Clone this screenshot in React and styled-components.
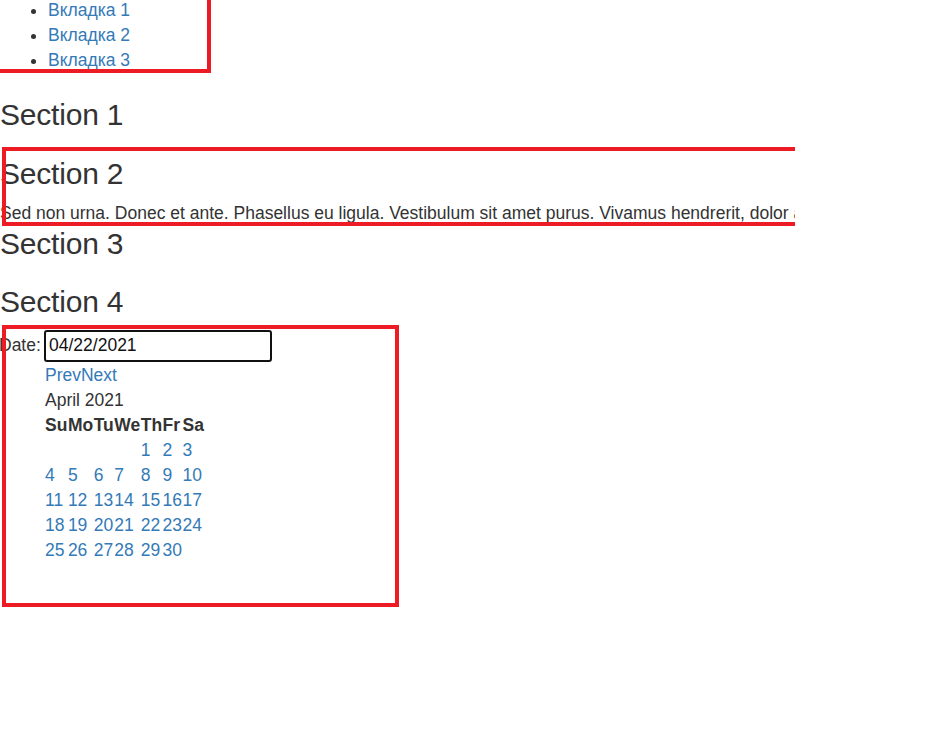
import React from "react";
import styled, { createGlobalStyle } from "styled-components";

const RED = "#ed1c24";
const LINK = "#337ab7";

const GlobalStyle = createGlobalStyle`
  html, body { margin: 0; padding: 0; background: #fff; }
  body {
    font-family: "Liberation Sans", Arial, Helvetica, sans-serif;
    font-size: 17.5px;
    line-height: 25px;
    color: #333;
  }
  * { box-sizing: border-box; }
`;

const Page = styled.div`
  width: 795px;
  overflow: hidden;
  padding-bottom: 40px;
`;

const framed = `
  outline: 4px solid ${RED};
  outline-offset: -6px;
`;

const TabList = styled.ul`
  ${framed}
  width: 222.5px;
  margin: -9px 0 0 -10px;
  padding: 7.4px 0 1.6px 58px;
  list-style: disc;
`;

const TabItem = styled.li`
  line-height: 25px;
`;

const Link = styled.a`
  color: ${LINK};
  text-decoration: none;
  cursor: pointer;
`;

const Heading = styled.h3`
  font-size: 30px;
  font-weight: 500;
  line-height: 33px;
  margin: ${(p) => p.$top}px 0 0;
  color: #333;
  letter-spacing: -0.2px;
`;

const SectionBox = styled.div`
  ${framed}
  margin: 14px -20px 0 0;
  padding: 11.4px 0 2px;
`;

const Paragraph = styled.p`
  margin: 11.5px 0 0;
  white-space: nowrap;
  line-height: 25px;
`;

const DateBox = styled.div`
  ${framed}
  width: 401px;
  margin-top: 5.2px;
  padding: 6.5px 0 46px;
`;

const DateRow = styled.div`
  display: flex;
  align-items: center;
  gap: 3.2px;
  height: 32px;
  margin-bottom: 0.9px;
`;

const Label = styled.label`
  line-height: 25px;
  margin-left: -1px;
`;

const DateInput = styled.input`
  width: 228px;
  height: 32px;
  border: 2px solid #111;
  border-radius: 3px;
  padding: 1px 3px;
  font-family: inherit;
  font-size: 17.5px;
  color: #111;
  background: #fff;
  outline: none;
`;

const Picker = styled.div`
  margin-left: 45px;
`;

const PickerNav = styled.div`
  line-height: 25px;
`;

const PickerTitle = styled.div`
  line-height: 25px;
`;

const Table = styled.table`
  border-collapse: collapse;
  border-spacing: 0;
  font-size: 17.5px;
  line-height: 25px;
`;

const HeadCell = styled.th`
  padding: 0 0.5px 0 0;
  text-align: left;
  font-weight: bold;
  color: #333;
`;

const DayCell = styled.td`
  padding: 0 0.5px 0 0;
  text-align: left;
`;

const weeks = [
  [null, null, null, null, 1, 2, 3],
  [4, 5, 6, 7, 8, 9, 10],
  [11, 12, 13, 14, 15, 16, 17],
  [18, 19, 20, 21, 22, 23, 24],
  [25, 26, 27, 28, 29, 30, null],
];

const days = ["Su", "Mo", "Tu", "We", "Th", "Fr", "Sa"];

export default function App() {
  return (
    <>
      <GlobalStyle />
      <Page>
        <TabList>
          <TabItem><Link>Вкладка 1</Link></TabItem>
          <TabItem><Link>Вкладка 2</Link></TabItem>
          <TabItem><Link>Вкладка 3</Link></TabItem>
        </TabList>

        <Heading $top={23.4}>Section 1</Heading>

        <SectionBox>
          <Heading $top={0}>Section 2</Heading>
          <Paragraph>
            Sed non urna. Donec et ante. Phasellus eu ligula. Vestibulum sit amet purus. Vivamus hendrerit, dolor at aliquet laoreet, mauris turpis porttitor velit, faucibus interdum tellus libero ac justo.
          </Paragraph>
        </SectionBox>

        <Heading $top={-1.5}>Section 3</Heading>
        <Heading $top={25.2}>Section 4</Heading>

        <DateBox>
          <DateRow>
            <Label htmlFor="date">Date:</Label>
            <DateInput id="date" type="text" defaultValue="04/22/2021" />
          </DateRow>
          <Picker>
            <PickerNav>
              <Link>Prev</Link>
              <Link>Next</Link>
            </PickerNav>
            <PickerTitle>April 2021</PickerTitle>
            <Table>
              <thead>
                <tr>
                  {days.map((d) => (
                    <HeadCell key={d}>{d}</HeadCell>
                  ))}
                </tr>
              </thead>
              <tbody>
                {weeks.map((w, i) => (
                  <tr key={i}>
                    {w.map((n, j) => (
                      <DayCell key={j}>{n ? <Link>{n}</Link> : null}</DayCell>
                    ))}
                  </tr>
                ))}
              </tbody>
            </Table>
          </Picker>
        </DateBox>
      </Page>
    </>
  );
}
